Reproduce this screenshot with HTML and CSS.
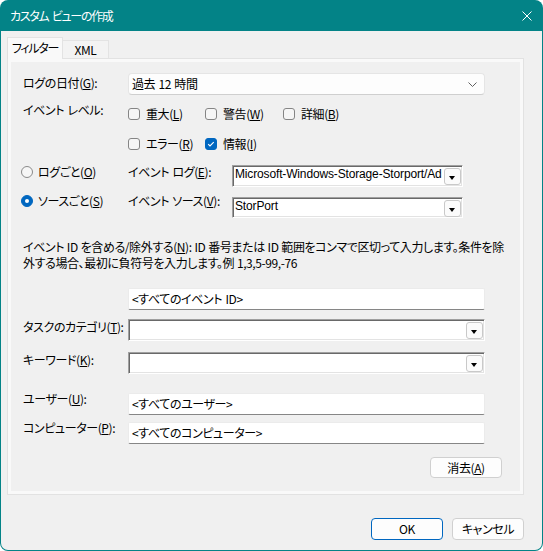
FILE: index.html
```html
<!DOCTYPE html>
<html lang="ja">
<head>
<meta charset="utf-8">
<link rel="stylesheet" href="styles.css">
</head>
<body>
<div class="window">
  <div class="titlebar">
    <span class="title">カスタム ビューの作成</span>
    <svg class="close" viewBox="0 0 10 10" width="10" height="10"><path d="M0.5 0.5L9.5 9.5M9.5 0.5L0.5 9.5" stroke="#fff" stroke-width="1" fill="none"/></svg>
  </div>
  <div class="client">
    <div class="tabs">
      <div class="tab active">フィルター</div>
      <div class="tab">XML</div>
    </div>
    <div class="panel">
      <div class="page">
        <div class="row row-date">
          <div class="label lbl-date">ログの日付(<u>G</u>):</div>
          <div class="combo"><span>過去 12 時間</span>
            <svg class="chev" viewBox="0 0 9 5" width="9" height="5"><path d="M0.5 0.5L4.5 4.5L8.5 0.5" stroke="#606060" fill="none"/></svg>
          </div>
        </div>
        <div class="row row-lvl1">
          <div class="label lbl-lvl">イベント レベル:</div>
          <div class="checks">
            <label class="chk w1"><span class="box"></span>重大(<u>L</u>)</label>
            <label class="chk w2"><span class="box"></span>警告(<u>W</u>)</label>
            <label class="chk"><span class="box"></span>詳細(<u>B</u>)</label>
          </div>
        </div>
        <div class="row row-lvl2">
          <div class="checks">
            <label class="chk w1"><span class="box"></span>エラー(<u>R</u>)</label>
            <label class="chk w2"><span class="box checked"><svg viewBox="0 0 12 12" width="12" height="12"><path d="M3.2 6.1L5 7.9L8.7 4.2" stroke="#fff" stroke-width="1.1" fill="none"/></svg></span>情報(<u>I</u>)</label>
          </div>
        </div>
        <div class="row row-r1">
          <label class="radio"><span class="dot"></span>ログごと(<u>O</u>)</label>
          <div class="label lbl-src">イベント ログ(<u>E</u>):</div>
          <div class="sunken s-r1"><span class="stext">Microsoft-Windows-Storage-Storport/Ad</span><span class="dropbtn"></span></div>
        </div>
        <div class="row row-r2">
          <label class="radio"><span class="dot on"></span>ソースごと(<u>S</u>)</label>
          <div class="label lbl-src">イベント ソース(<u>V</u>):</div>
          <div class="sunken s-r2"><span class="stext">StorPort</span><span class="dropbtn"></span></div>
        </div>
        <div class="desc">
          <div class="line">イベント ID を含める/除外する(<u>N</u>): ID 番号または ID 範囲をコンマで区切って入力します。条件を除</div>
          <div class="line">外する場合、最初に負符号を入力します。例 1,3,5-99,-76</div>
        </div>
        <div class="row row-id">
          <div class="edit">&lt;すべてのイベント ID&gt;</div>
        </div>
        <div class="row row-task">
          <div class="label">タスクのカテゴリ(<u>T</u>):</div>
          <div class="sunken wide"><span class="stext"></span><span class="dropbtn"></span></div>
        </div>
        <div class="row row-kw">
          <div class="label">キーワード(<u>K</u>):</div>
          <div class="sunken wide"><span class="stext"></span><span class="dropbtn"></span></div>
        </div>
        <div class="row row-user">
          <div class="label lbl-up">ユーザー(<u>U</u>):</div>
          <div class="edit">&lt;すべてのユーザー&gt;</div>
        </div>
        <div class="row row-comp">
          <div class="label lbl-up">コンピューター(<u>P</u>):</div>
          <div class="edit">&lt;すべてのコンピューター&gt;</div>
        </div>
        <div class="row row-clear">
          <button class="btn">消去(<u>A</u>)</button>
        </div>
      </div>
    </div>
    <div class="footer">
      <button class="btn primary">OK</button>
      <button class="btn">キャンセル</button>
    </div>
  </div>
</div>
</body>
</html>
```

FILE: styles.css
```css
* { box-sizing: border-box; }
html, body { margin: 0; padding: 0; }
body {
  width: 543px;
  height: 551px;
  background: #ffffff;
  font-family: "Noto Sans CJK JP", "Noto Sans", sans-serif;
  font-size: 12px;
  font-feature-settings: "palt" 1;
  letter-spacing: -0.4px;
  word-spacing: 1px;
  color: #000;
  overflow: hidden;
}
u { text-decoration: underline; text-underline-offset: 1px; }

.window {
  width: 543px;
  height: 551px;
  background: #038387;
  border-radius: 8px;
  display: flex;
  flex-direction: column;
  overflow: hidden;
}
.titlebar {
  height: 31px;
  flex: none;
  display: flex;
  align-items: center;
  padding: 0 11px 0 10px;
  color: #fff;
}
.title { flex: 1; line-height: 16px; letter-spacing: -1.3px; word-spacing: 2px; }
.close { display: block; }

.client {
  flex: 1;
  margin: 0 1px 1px 1px;
  background: #f0f0f0;
  border-radius: 0 0 7px 7px;
  padding: 6px 18px 0 6px;
  display: flex;
  flex-direction: column;
}

.tabs {
  height: 21px;
  display: flex;
  align-items: flex-start;
  position: relative;
  z-index: 1;
}
.tab {
  height: 18px;
  margin-top: 3px;
  width: 46px;
  border: 1px solid #e3e3e3;
  border-left: none;
  border-bottom: none;
  background: #f3f3f3;
  text-align: center;
  line-height: 16px;
  padding-top: 1px;
}
.tab.active {
  width: 56px;
  height: 22px;
  margin-top: 0;
  border-left: 1px solid #e0e0e0;
  background: #f9f9f9;
  padding-top: 2px;
  letter-spacing: -1.3px;
}

.panel {
  width: 517px;
  height: 437px;
  border: 1px solid #e2e2e2;
  background: #f9f9f9;
  padding: 3px;
}
.page {
  height: 100%;
  background: #f0f0f0;
  padding-left: 12px;
  display: flex;
  flex-direction: column;
}

.row { display: flex; align-items: flex-start; flex: none; }
.label { width: 105px; line-height: 16px; white-space: nowrap; }

.row-date { margin-top: 11px; height: 22px; }
.lbl-date { padding-top: 2px; }
.combo {
  width: 357px;
  height: 22px;
  background: #fdfdfd;
  border: 1px solid #e5e5e5;
  border-bottom-color: #cfcfcf;
  border-radius: 4px;
  display: flex;
  align-items: center;
  justify-content: space-between;
  padding: 0 7px 0 3px;
  line-height: 16px;
}
.chev { display: block; }

.row-lvl1 { margin-top: 7px; }
.row-lvl2 { margin-top: 14px; padding-left: 105px; }
.checks { display: flex; margin-top: 4px; }
.row-lvl2 .checks { margin-top: 0; }
.chk { display: flex; align-items: center; line-height: 16px; white-space: nowrap; }
.chk.w1 { width: 77px; }
.chk.w2 { width: 78px; }
.box {
  width: 12px;
  height: 12px;
  border: 1px solid #858585;
  border-radius: 3px;
  background: #f6f6f6;
  margin-right: 6px;
  flex: none;
  position: relative;
}
.box.checked { background: #0067c0; border-color: #0067c0; }
.box svg { position: absolute; left: -1px; top: -1px; }

.row-r1 { margin-top: 12px; }
.row-r2 { margin-top: 6px; }
.radio {
  width: 107px;
  margin-left: -2px;
  display: flex;
  align-items: center;
  line-height: 16px;
  white-space: nowrap;
}
.dot {
  width: 12px;
  height: 12px;
  border: 1px solid #8a8a8a;
  border-radius: 50%;
  background: #f6f6f6;
  margin-right: 5px;
  flex: none;
  position: relative;
}
.dot.on { background: #0067c0; border-color: #0067c0; }
.dot.on::after {
  content: "";
  position: absolute;
  left: 3px;
  top: 3px;
  width: 4px;
  height: 4px;
  border-radius: 50%;
  background: #fff;
}
.lbl-src { width: 104px; }

.sunken {
  height: 22px;
  background: #fff;
  border: 1px solid;
  border-color: #a0a0a0 #ffffff #ffffff #a0a0a0;
  box-shadow: inset 1px 1px 0 #696969, inset -1px -1px 0 #e3e3e3;
  display: flex;
  align-items: flex-start;
  padding: 1px 1px 0 2px;
  overflow: hidden;
}
.s-r1 { width: 231px; margin-top: 1px; }
.s-r2 { width: 231px; height: 21px; margin-top: 4px; }
.sunken.wide { width: 357px; }
.stext {
  flex: 1;
  font-family: "Liberation Sans", Arial, sans-serif;
  font-size: 12px;
  letter-spacing: -0.15px;
  word-spacing: 0;
  line-height: 15px;
  white-space: nowrap;
  overflow: hidden;
}
.dropbtn {
  width: 17px;
  height: 17px;
  margin-top: 1px;
  flex: none;
  border: 1px solid #c9c9c9;
  border-radius: 3px;
  background: #fbfbfb;
  position: relative;
}
.dropbtn::after {
  content: "";
  position: absolute;
  left: 4px;
  top: 7px;
  border-left: 3.5px solid transparent;
  border-right: 3.5px solid transparent;
  border-top: 4px solid #000;
}

.desc { margin-top: 21px; line-height: 16px; word-spacing: 0.5px; }
.desc .line { white-space: nowrap; }

.edit {
  width: 357px;
  height: 22px;
  background: #fff;
  border: 1px solid #ebebeb;
  border-bottom-color: #868686;
  border-radius: 2px;
  padding: 2px 3px 0;
  line-height: 16px;
  white-space: nowrap;
}
.row-id { margin-top: 17px; padding-left: 105px; }
.row-task { margin-top: 9px; }
.row-kw { margin-top: 11px; }
.row-user { margin-top: 19px; }
.row-comp { margin-top: 7px; }
.lbl-up { margin-top: -2px; }

.row-clear { margin-top: 13px; justify-content: flex-end; padding-right: 18px; }

.btn {
  width: 72px;
  height: 21px;
  background: #fdfdfd;
  border: 1px solid #d0d0d0;
  border-radius: 4px;
  font-family: inherit;
  font-size: 12px;
  font-feature-settings: "palt" 1;
  letter-spacing: -0.4px;
  color: #000;
  padding: 0;
  line-height: 16px;
}
.footer {
  margin-top: 23px;
  display: flex;
  justify-content: flex-end;
  gap: 9px;
}
.footer .btn { height: 22px; }
.btn.primary { border-color: #0067c0; }
```
